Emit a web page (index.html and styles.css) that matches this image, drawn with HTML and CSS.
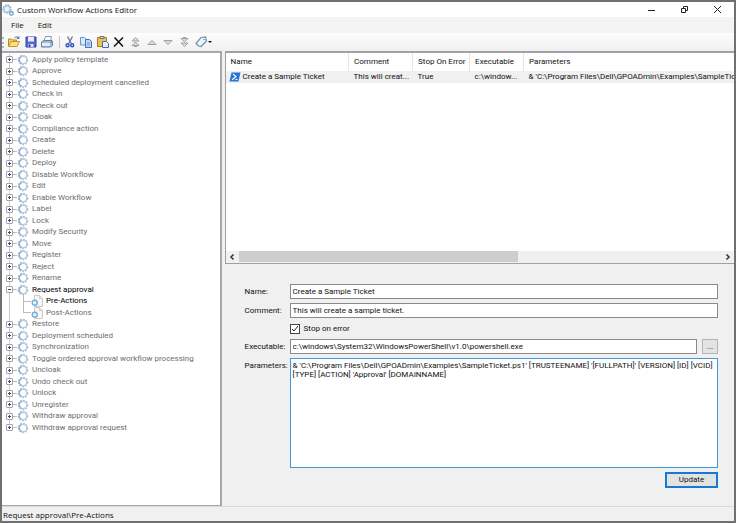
FILE: index.html
```html
<!DOCTYPE html>
<html lang="en">
<head>
    <meta charset="UTF-8">
    <meta name="viewport" content="width=device-width, initial-scale=1.0">
    <title>Custom Workflow Actions Editor</title>
    <link rel="stylesheet" href="styles.css">
</head>
<body>
    <!-- Shared icons -->
    <svg class="symbols" aria-hidden="true">
        <symbol id="gear" viewBox="0 0 12 12">
            <circle cx="6" cy="6" r="4.4" fill="none" stroke="#b3bccb" stroke-width="1.8" stroke-dasharray="1.8 1.1"/>
            <circle cx="6" cy="6" r="3.7" fill="#fff" stroke="#bccddf" stroke-width="1.4"/>
            <path d="M4.500 2.600A3.700 3.700 0 0 0 4.600 9.500" fill="none" stroke="#8fa9d8" stroke-width="1.300"/>
        </symbol>
        <symbol id="page" viewBox="0 0 12 12">
            <path d="M3.5.5h5l3 3v8h-8z" fill="#f6f6f6" stroke="#ccc"/>
            <path d="M8.5.5v3h3" fill="none" stroke="#ccc"/>
            <circle cx="3.7" cy="7.7" r="2.500" fill="#e4f4fd" stroke="#78aed2" stroke-width="1.400"/>
        </symbol>
    </svg>

    <div class="window">
        <header class="titlebar">
            <svg class="app-icon" viewBox="0 0 12 12">
                <circle cx="5" cy="5" r="3.7" fill="none" stroke="#8db6d6" stroke-width="2" stroke-dasharray="1.7 .8"/>
                <circle cx="5" cy="5" r="2.9" fill="#eef7fd" stroke="#a5cbe6"/>
                <circle cx="9.4" cy="9.4" r="1.8" fill="#fff" stroke="#5f94c8" stroke-width="1.2"/>
            </svg>
            <h1>Custom Workflow Actions Editor</h1>
            <div class="window-buttons">
                <button type="button" aria-label="Minimize"><svg viewBox="0 0 9 9"><path d="M1 5.5h7"/></svg></button>
                <button type="button" aria-label="Restore"><svg viewBox="0 0 9 9"><path d="M1.5 3.5h4v4h-4zM3.5 3V1.5h4v4H6"/></svg></button>
                <button type="button" aria-label="Close"><svg viewBox="0 0 9 9"><path d="M1 1l7 7M8 1L1 8"/></svg></button>
            </div>
        </header>

        <nav class="menubar">
            <button type="button">File</button>
            <button type="button">Edit</button>
        </nav>

        <div class="toolbar">
            <span class="grip"></span>
            <div class="tools tools-file">
                <button type="button" aria-label="Open"><svg viewBox="0 0 14 14"><path d="M1.5 11V4h3l1 1h4v2" fill="#f7cf62" stroke="#b98a22"/><path d="M1.5 11.5l2.5-5h8.500l-2.500 5z" fill="#ffdf82" stroke="#c8952c"/><path d="M7.500 3c1.500-1.800 3.500-1.500 4.200.3m.3-2v2.200H9.800" fill="none" stroke="#3f6fa8"/></svg></button>
                <button type="button" aria-label="Save"><svg viewBox="0 0 14 14"><path d="M2 2h10v10H2z" fill="#5968cf" stroke="#3542a4"/><path d="M4 2h6v4.500H4z" fill="#e9edfb"/><path d="M4.500 9h5v3h-5z" fill="#dce1f5"/><path d="M5 9.500h1.500V12H5z" fill="#28358e"/></svg></button>
                <button type="button" aria-label="Print"><svg viewBox="0 0 14 14"><path d="M4 6l1.500-4.500h6L10.500 6z" fill="#fff" stroke="#7f9bbb"/><path d="M1.500 7L4 5.500h8l.5 1.500v3.500L10 12H1.500z" fill="#a7bdd5" stroke="#6280a3"/><path d="M2 8h8v3H2z" fill="#e4ecf4"/><path d="M10 8l2-1.500" stroke="#6280a3"/></svg></button>
            </div>
            <span class="divider"></span>
            <div class="tools tools-edit">
                <button type="button" aria-label="Cut"><svg viewBox="0 0 14 14"><path d="M4.500 1.500l3.800 7M9.500 1.500l-3.800 7" stroke="#66788f" stroke-width="1.300"/><circle cx="4.600" cy="10.300" r="1.500" fill="none" stroke="#2c57c2" stroke-width="1.400"/><circle cx="9.200" cy="10.300" r="1.500" fill="none" stroke="#2c57c2" stroke-width="1.400"/></svg></button>
                <button type="button" aria-label="Copy"><svg viewBox="0 0 14 14"><path d="M1.500 2.500h4l2 2V10h-6z" fill="#dce9fa" stroke="#6b93cf"/><path d="M6.500 4.500h4l2 2v6h-6z" fill="#c0d7f5" stroke="#3f70bb"/><path d="M8 8h3M8 10h3" stroke="#6b93cf"/></svg></button>
                <button type="button" aria-label="Paste"><svg viewBox="0 0 14 14"><path d="M1.500 2.500h9v9h-9z" fill="#f0bf4e" stroke="#a87b25"/><path d="M4 1.500h4v2H4z" fill="#dadada" stroke="#777"/><path d="M6.500 6.500h4l2 2v4h-6z" fill="#e5effb" stroke="#456fae"/></svg></button>
                <button type="button" aria-label="Delete"><svg viewBox="0 0 14 14"><path d="M2.500 2.500l8.500 9M11 2.500l-9 9" stroke="#111" stroke-width="1.500"/></svg></button>
                <button type="button" aria-label="Move to top"><svg viewBox="0 0 14 14"><path d="M3 6l3.500-3.500L10 6zM3 10.500L6.500 7l3.500 3.500zM5 11.500h3" class="arrow"/></svg></button>
                <button type="button" aria-label="Move up"><svg viewBox="0 0 14 14"><path d="M3 9.500L7 5.500l4 4z" class="arrow"/></svg></button>
                <button type="button" aria-label="Move down"><svg viewBox="0 0 14 14"><path d="M3 5.500l4 4 4-4z" class="arrow"/></svg></button>
                <button type="button" aria-label="Move to bottom"><svg viewBox="0 0 14 14"><path d="M5 2.500h3M3 3.500L6.500 7 10 3.500zM3 8l3.500 3.500L10 8z" class="arrow"/></svg></button>
                <button type="button" aria-label="Tag"><svg viewBox="0 0 14 14"><path d="M2 8.500l5-6 4.500-.5 1 4-5.500 5.500-2.500-.5z" fill="#f3f9fd" stroke="#6992ae" stroke-width="1.200"/><circle cx="10" cy="4.500" r=".8" fill="#6992ae"/></svg></button>
            </div>
            <span class="drop-arrow"></span>
        </div>

        <main class="panes">
            <ul class="tree" id="tree"></ul>

            <section class="details">
                <div class="list">
                    <div class="list-view">
                        <table>
                            <colgroup>
                                <col class="col-name">
                                <col class="col-comment">
                                <col class="col-stop">
                                <col class="col-exe">
                                <col>
                            </colgroup>
                            <thead>
                                <tr><th>Name</th><th>Comment</th><th>Stop On Error</th><th>Executable</th><th>Parameters</th></tr>
                            </thead>
                            <tbody>
                                <tr>
                                    <td><span class="script-name"><svg viewBox="0 0 12 10"><path d="M2.500.5h9l-2 9h-9z" fill="#2673d9"/><path d="M4 2l3 2.800-4 3M6.500 7.500h2" fill="none" stroke="#fff" stroke-width="1.200"/></svg>Create a Sample Ticket</span></td>
                                    <td>This will creat...</td>
                                    <td>True</td>
                                    <td>c:\window...</td>
                                    <td>&amp; 'C:\Program Files\Dell\GPOADmin\Examples\SampleTicket.ps1'</td>
                                </tr>
                            </tbody>
                        </table>
                    </div>
                    <div class="scrollbar">
                        <button type="button" aria-label="Scroll left"><svg viewBox="0 0 6 8"><path d="M4.500 1.500L2 4l2.500 2.500"/></svg></button>
                        <div class="track"><div class="thumb"></div></div>
                        <button type="button" aria-label="Scroll right"><svg viewBox="0 0 6 8"><path d="M1.500 1.500L4 4 1.500 6.500"/></svg></button>
                    </div>
                </div>

                <form class="action-form" id="actionForm">
                    <label for="name">Name:</label>
                    <input type="text" id="name" value="Create a Sample Ticket">

                    <label for="comment">Comment:</label>
                    <input type="text" id="comment" value="This will create a sample ticket.">

                    <div class="check">
                        <input type="checkbox" id="stop" checked>
                        <label for="stop">Stop on error</label>
                    </div>

                    <label for="executable">Executable:</label>
                    <div class="browse">
                        <input type="text" id="executable" value="c:\windows\System32\WindowsPowerShell\v1.0\powershell.exe">
                        <button type="button" aria-label="Browse">...</button>
                    </div>

                    <label for="parameters" class="label-top">Parameters:</label>
                    <textarea id="parameters" spellcheck="false">&amp; 'C:\Program Files\Dell\GPOADmin\Examples\SampleTicket.ps1' [TRUSTEENAME] '[FULLPATH]' [VERSION] [ID] [VCID]
[TYPE] [ACTION] 'Approval' [DOMAINNAME]</textarea>

                    <button type="submit" class="update">Update</button>
                </form>
            </section>
        </main>

        <footer class="statusbar">Request approval\Pre-Actions</footer>
    </div>

    <script>
        const actions = [
            'Apply policy template', 'Approve', 'Scheduled deployment cancelled', 'Check in',
            'Check out', 'Cloak', 'Compliance action', 'Create', 'Delete', 'Deploy',
            'Disable Workflow', 'Edit', 'Enable Workflow', 'Label', 'Lock', 'Modify Security',
            'Move', 'Register', 'Reject', 'Rename', 'Request approval', 'Restore',
            'Deployment scheduled', 'Synchronization', 'Toggle ordered approval workflow processing',
            'Uncloak', 'Undo check out', 'Unlock', 'Unregister', 'Withdraw approval',
            'Withdraw approval request'
        ];

        // Build the tree, only the selected action is expanded
        document.getElementById('tree').innerHTML = actions.map(function(name) {
            const open = name === 'Request approval';
            const children = `
                <ul class="branch">
                    <li><div class="node active"><svg><use href="#page"/></svg><span>Pre-Actions</span></div></li>
                    <li><div class="node"><svg><use href="#page"/></svg><span>Post-Actions</span></div></li>
                </ul>`;
            return `<li>
                <div class="node ${open ? 'active' : ''}">
                    <button type="button" class="toggle ${open ? 'open' : ''}" aria-label="Toggle ${name}"></button>
                    <svg><use href="#gear"/></svg><span>${name}</span>
                </div>${open ? children : ''}
            </li>`;
        }).join('');

        document.getElementById('actionForm').addEventListener('submit', function(e) {
            e.preventDefault();
        });
    </script>
</body>
</html>
```
FILE: styles.css
```css
* {
    margin: 0;
    padding: 0;
    box-sizing: border-box;
}

body {
    background-color: #f0f0f0;
    color: #111;
    font-family: Roboto, "Liberation Sans", sans-serif;
    font-size: 8px;
    line-height: 10px;
}

button, input, textarea {
    font: inherit;
    color: inherit;
}

button {
    border: none;
    background: none;
}

svg {
    display: block;
    flex: none;
}

.symbols {
    position: absolute;
    width: 0;
    height: 0;
}

.window {
    display: flex;
    flex-direction: column;
    min-height: 100vh;
    border: 2px solid #707070;
}

/* Title bar, menu and toolbar */
.titlebar {
    display: flex;
    align-items: center;
    height: 15px;
    background-color: #fff;
}

.app-icon {
    width: 12px;
    height: 12px;
}

h1 {
    flex: 1;
    padding-left: 3px;
    font-family: "Open Sans", sans-serif;
    font-size: 8px;
    font-weight: normal;
}

.window-buttons {
    display: flex;
    gap: 24px;
    padding-right: 12px;
}

.window-buttons svg {
    width: 9px;
    height: 9px;
    fill: none;
    stroke: #222;
}

.menubar {
    display: flex;
    gap: 14px;
    height: 16px;
    padding-left: 9px;
    background-color: #f3f3f3;
    font-family: "Open Sans", sans-serif;
}

.toolbar {
    display: flex;
    align-items: center;
    height: 18px;
    background: linear-gradient(#fdfdfd, #f0f0f0);
}

.grip {
    height: 11px;
    border-left: 2px dotted #bbb;
}

.tools {
    display: flex;
    justify-content: space-between;
    padding-left: 3px;
}

.tools svg {
    width: 14px;
    height: 14px;
    fill: none;
}

.tools .arrow {
    fill: #ddd;
    stroke: #a0a0a0;
}

.tools-file {
    width: 50px;
}

.tools-edit {
    width: 148px;
}

.divider {
    height: 12px;
    margin-left: 5px;
    border-left: 1px solid #c4c4c4;
}

.drop-arrow {
    border: 2px solid transparent;
    border-top-color: #111;
    border-bottom: none;
}

/* Panes */
.panes {
    display: flex;
    flex: 1;
    gap: 3px;
}

.tree {
    flex: 0 0 30%;
    padding: 1px 0 0 4px;
    border: solid #a7a7ad;
    border-width: 2px 2px 1px 0;
    background-color: #fff;
    color: #6d6d6d;
    list-style: none;
    white-space: nowrap;
}

.tree > li {
    background: linear-gradient(#ccc, #ccc) 3px 0 / 1px 100% no-repeat;
}

.tree > li:last-child {
    background-size: 1px 6px;
}

.node {
    display: flex;
    align-items: center;
    height: 11px;
}

.tree > li:nth-child(even) > .node,
.branch > li:first-child > .node {
    height: 12px;
}

.node svg {
    width: 12px;
    height: 12px;
    margin-right: 3px;
}

.node.active {
    color: #000;
}

.toggle {
    width: 7px;
    height: 7px;
    border: 1px solid #a3a3a3;
    border-radius: 1px;
    background:
        linear-gradient(#35478f, #35478f) center / 3px 1px no-repeat,
        linear-gradient(#35478f, #35478f) center / 1px 3px no-repeat,
        #fff;
}

.toggle.open {
    background: linear-gradient(#35478f, #35478f) center / 3px 1px no-repeat, #fff;
}

.toggle + svg {
    width: 16px;
    padding-left: 4px;
    background: linear-gradient(#bbb, #bbb) 0 center / 4px 1px no-repeat;
}

.branch {
    margin-left: 17px;
    list-style: none;
}

.branch > li {
    background: linear-gradient(#bbb, #bbb) 0 0 / 1px 100% no-repeat;
}

.branch > li:last-child {
    background-size: 1px 6px;
}

.branch .node {
    padding-left: 8px;
    background: linear-gradient(#bbb, #bbb) 0 center / 8px 1px no-repeat;
}

.details {
    display: flex;
    flex: 1;
    flex-direction: column;
    min-width: 0;
}

/* Actions list */
.list {
    display: flex;
    flex: 0 0 213px;
    flex-direction: column;
    border: solid #a0a0a6;
    border-width: 2px 0 1px 1px;
    background-color: #fff;
}

.list-view {
    flex: 1;
    overflow: hidden;
}

table {
    width: 100%;
    table-layout: fixed;
    border-collapse: collapse;
    white-space: nowrap;
}

th {
    height: 18px;
    padding-left: 5px;
    border-right: 1px solid #e5e5e5;
    font-weight: normal;
    text-align: left;
}

th:last-child {
    border-right: none;
}

td {
    height: 12px;
    padding-left: 5px;
    background-color: #f0f0f0;
}

td:first-child {
    padding-left: 3px;
}

.col-name {
    width: 123px;
}

.col-comment {
    width: 64px;
}

.col-stop {
    width: 57px;
}

.col-exe {
    width: 54px;
}

.script-name {
    display: flex;
    align-items: center;
    gap: 2px;
}

.script-name svg {
    width: 12px;
    height: 10px;
}

.scrollbar {
    display: flex;
    height: 12px;
    background-color: #f0f0f0;
}

.scrollbar button {
    display: flex;
    align-items: center;
    justify-content: center;
    width: 13px;
}

.scrollbar svg {
    width: 6px;
    height: 8px;
    fill: none;
    stroke: #333;
    stroke-width: 1.5;
}

.track {
    flex: 1;
}

.thumb {
    width: 58%;
    height: 11px;
    background-color: #cdcdcd;
}

/* Action form */
.action-form {
    display: grid;
    grid-template-columns: 40px 1fr;
    grid-template-rows: 15px 15px 13px 15px 1fr 16px;
    flex: 1;
    gap: 4px 5px;
    align-items: center;
    padding: 20px 16px 18px 20px;
}

input[type="text"] {
    width: 100%;
    height: 15px;
    padding: 0 2px;
    border: 1px solid #8a8a8a;
    background-color: #fff;
}

.check {
    display: flex;
    grid-column: 2;
    gap: 4px;
    align-items: center;
}

.check input {
    width: 10px;
    height: 10px;
    appearance: none;
    border: 1px solid #444;
    background: #fff url("data:image/svg+xml,%3Csvg xmlns='http://www.w3.org/2000/svg' viewBox='0 0 8 8'%3E%3Cpath d='M1 4l2 2 4-5' fill='none' stroke='%23222'/%3E%3C/svg%3E");
}

.browse {
    display: flex;
    gap: 5px;
}

.browse button {
    flex: 0 0 16px;
    height: 15px;
    border: 1px solid #b4b4b4;
    background-color: #e3e3e3;
}

.label-top {
    align-self: start;
    padding-top: 3px;
}

textarea {
    width: 100%;
    height: 100%;
    padding: 2px;
    border: 1px solid #3f97dc;
    outline: none;
    background-color: #fff;
    line-height: 9px;
    resize: none;
}

.update {
    grid-column: 2;
    justify-self: end;
    width: 53px;
    height: 16px;
    border: 2px solid #1479d7;
    background-color: #e2e2e2;
}

.statusbar {
    height: 15px;
    padding: 3px 1px 0;
    border-top: 1px solid #d9d9d9;
    font-family: "Open Sans", sans-serif;
}
```
